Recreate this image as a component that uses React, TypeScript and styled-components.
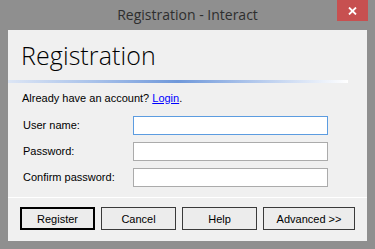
import styled, { createGlobalStyle } from "styled-components";

const GlobalStyle = createGlobalStyle`
  html, body {
    margin: 0;
    padding: 0;
    background: #8f8f8f;
  }
  * {
    box-sizing: border-box;
  }
`;

const Window = styled.div`
  width: 375px;
  height: 249px;
  background: #8f8f8f;
  display: flex;
  flex-direction: column;
  font-family: "Liberation Sans", Arial, sans-serif;
  font-size: 11px;
  color: #000;
`;

const TitleBar = styled.div`
  height: 30px;
  display: grid;
  grid-template-columns: 1fr auto 1fr;
  align-items: start;
`;

const Title = styled.div`
  grid-column: 2;
  font-family: "Open Sans", "Noto Sans", sans-serif;
  font-size: 14px;
  line-height: 30px;
  color: #2e2e2e;
  white-space: nowrap;
`;

const CloseButton = styled.div`
  grid-column: 3;
  justify-self: end;
  margin-right: 7px;
  width: 31px;
  height: 21px;
  background: #c75050;
  display: flex;
  align-items: center;
  justify-content: center;
`;

const Content = styled.div`
  flex: 1;
  margin: 0 8px 8px;
  background: #f0f0f0;
  display: flex;
  flex-direction: column;
`;

const Heading = styled.h1`
  margin: 0;
  padding: 8px 0 0 13px;
  font-family: "Open Sans", "Noto Sans", sans-serif;
  font-weight: 300;
  font-size: 25px;
  line-height: 34px;
  letter-spacing: 0.1px;
  color: #000;
`;

const GradientRule = styled.div`
  margin-top: 8px;
  width: 340px;
  height: 3px;
  background: linear-gradient(
    to right,
    #dde6f5 0%,
    #a9c2ea 25%,
    #6f98da 50%,
    #b9cdee 75%,
    #ffffff 100%
  );
`;

const Intro = styled.p`
  margin: 8px 0 0 14px;
  line-height: 14px;
`;

const Link = styled.a`
  color: #0000ff;
  text-decoration: underline;
`;

const Form = styled.div`
  margin: 11px 0 0 15px;
  display: grid;
  grid-template-columns: 110px 195px;
  row-gap: 7px;
  align-items: center;
`;

const Label = styled.label`
  line-height: 19px;
`;

const Field = styled.div<{ focused?: boolean }>`
  height: 19px;
  background: #fff;
  border: 1px solid ${(p) => (p.focused ? "#5c9ce0" : "#ababab")};
`;

const Divider = styled.div`
  margin-top: 10px;
  height: 1px;
  background: #ffffff;
`;

const ButtonRow = styled.div`
  margin: 9px 0 0 12px;
  display: flex;
  gap: 6px;
`;

const Button = styled.div<{ primary?: boolean; wide?: boolean }>`
  width: ${(p) => (p.wide ? "92px" : "75px")};
  height: 23px;
  background: #ececec;
  border: ${(p) => (p.primary ? "2px solid #000" : "1px solid #3a3a3a")};
  display: flex;
  align-items: center;
  justify-content: center;
  font-size: 11px;
`;

export default function App() {
  return (
    <>
      <GlobalStyle />
      <Window>
        <TitleBar>
          <Title>Registration - Interact</Title>
          <CloseButton>
            <svg width="9" height="8" viewBox="0 0 9 8">
              <path d="M1 0.5 L8 7.5 M8 0.5 L1 7.5" stroke="#fff" strokeWidth="1.8" />
            </svg>
          </CloseButton>
        </TitleBar>
        <Content>
          <Heading>Registration</Heading>
          <GradientRule />
          <Intro>
            Already have an account? <Link>Login</Link>.
          </Intro>
          <Form>
            <Label>User name:</Label>
            <Field focused />
            <Label>Password:</Label>
            <Field />
            <Label>Confirm password:</Label>
            <Field />
          </Form>
          <Divider />
          <ButtonRow>
            <Button primary>Register</Button>
            <Button>Cancel</Button>
            <Button>Help</Button>
            <Button wide>Advanced &gt;&gt;</Button>
          </ButtonRow>
        </Content>
      </Window>
    </>
  );
}
